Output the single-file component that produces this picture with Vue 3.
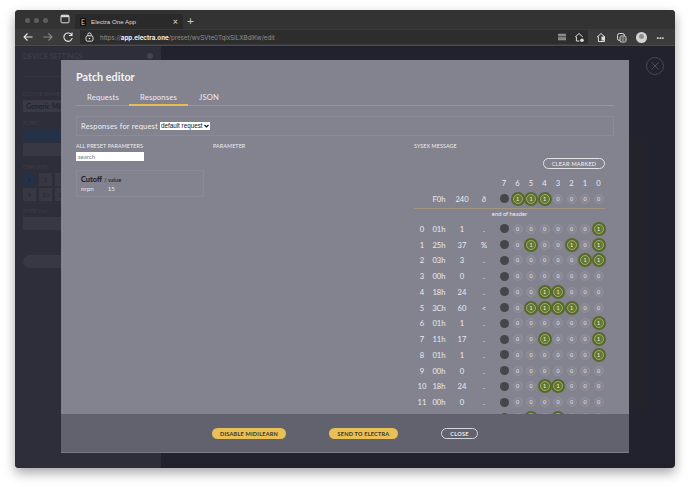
<template>
  <div class="page">
    <div class="window">
      <div class="titlebar">
        <div class="lights"><i></i><i></i><i></i></div>
        <svg class="tab-btn" width="10" height="10" viewBox="0 0 10 10"><rect x="1" y="1.2" width="8" height="7.6" rx="1" fill="none" stroke="#ddd" stroke-width="1"/><rect x="1" y="1.2" width="8" height="2" fill="#ddd"/></svg>
        <div class="tab">
          <span class="favicon">E</span>
          <span class="tab-title">Electra One App</span>
          <span class="tab-close">×</span>
        </div>
        <span class="new-tab">+</span>
      </div>
      <div class="toolbar">
        <svg class="nav" width="12" height="12" viewBox="0 0 12 12"><path d="M10.5 6H2M5.5 2.5 2 6l3.5 3.5" fill="none" stroke="#e6e6e6" stroke-width="1.1"/></svg>
        <svg class="nav fwd" width="12" height="12" viewBox="0 0 12 12"><path d="M1.5 6H10M6.5 2.5 10 6l-3.5 3.5" fill="none" stroke="#8a8a8a" stroke-width="1.1"/></svg>
        <svg class="nav reload" width="12" height="12" viewBox="0 0 12 12"><path d="M9.8 4.2A4.2 4.2 0 1 0 10.2 7M10 1.5v3H7" fill="none" stroke="#e6e6e6" stroke-width="1.1"/></svg>
        <div class="address">
          <svg width="9" height="10" viewBox="0 0 9 10"><rect x="1" y="3.8" width="7" height="5.4" rx="1.6" fill="none" stroke="#ddd" stroke-width="1"/><path d="M2.8 3.8V2.6a1.7 1.7 0 0 1 3.4 0v1.2" fill="none" stroke="#ddd" stroke-width="1"/><circle cx="4.5" cy="6.5" r=".8" fill="#ddd"/></svg>
          <span class="url">https://<b>app.electra.one</b>/preset/wvSVte0TqlxSILXBdlKw/edit</span>
          <svg class="addr-icon first" width="10" height="8" viewBox="0 0 10 8"><rect x="1" y=".7" width="8" height="6.6" fill="#8a8a8a"/><rect x="1" y="3.4" width="8" height=".8" fill="#2d2d2d"/></svg>
          <svg class="addr-icon" width="11" height="11" viewBox="0 0 11 11"><path d="M1.2 5 5 1.5 8.8 5M2.4 4.6V9h3" fill="none" stroke="#ddd" stroke-width="1"/><circle cx="8" cy="8.3" r="1.8" fill="#ddd"/></svg>
        </div>
        <svg class="tool one" width="11" height="11" viewBox="0 0 11 11"><path d="M1 5.2 5 1.5 9 5.2M2.4 4.4V9.5h6V4.4" fill="none" stroke="#ddd" stroke-width="1"/><rect x="5.5" y="4.5" width="3.5" height="4" fill="#ddd"/></svg>
        <svg class="tool" width="11" height="11" viewBox="0 0 11 11"><rect x="1.5" y="1.5" width="7" height="7" rx="2" fill="none" stroke="#ddd" stroke-width="1"/><rect x="4" y="4" width="6" height="6" rx="1.5" fill="#3b3b3b" stroke="#ddd" stroke-width="1"/><path d="M5.5 6h3M5.5 8h3" stroke="#ddd" stroke-width=".8"/></svg>
        <span class="avatar"><i></i></span>
        <span class="dots">···</span>
      </div>

      <div class="content">
        <aside class="sidebar">
          <div class="side-head"><span>DEVICE SETTINGS</span><i></i></div>
          <div class="side-label">DEVICE NAME</div>
          <div class="side-input">Generic MIDI</div>
          <div class="side-label port">PORT</div>
          <div class="side-block blue"></div>
          <div class="side-block"></div>
          <div class="side-label chan">CHANNEL</div>
          <div class="side-grid">
            <span class="active">1</span><span>2</span><span>3</span><span>4</span>
            <span>9</span><span>10</span><span>11</span><span>12</span>
          </div>
          <div class="side-label rate">RATE (ms)</div>
          <div class="side-block"></div>
          <div class="side-pill"></div>
        </aside>
        <main class="backdrop"><div class="back-panel"></div></main>

        <section class="modal">
          <div class="modal-body">
            <h1>Patch editor</h1>
            <nav class="tabs">
              <span v-for="t in tabs" :key="t" class="tab-link" :class="{ active: t === 'Responses' }">{{ t }}</span>
            </nav>
            <div class="request-bar">
              <span>Responses for request</span>
              <div class="select-wrap">
                <select><option>default request</option></select>
                <svg width="5" height="4" viewBox="0 0 5 4"><path d="M.5 1 2.5 3 4.5 1" fill="none" stroke="#111" stroke-width="1.2"/></svg>
              </div>
            </div>
            <div class="columns">
              <div class="col-params">
                <div class="col-label">ALL PRESET PARAMETERS</div>
                <input class="search" placeholder="search" />
                <div class="param-card">
                  <div class="param-name"><strong>Cutoff</strong><small>/ value</small></div>
                  <div class="param-meta"><span>nrpn</span><span>15</span></div>
                </div>
              </div>
              <div class="col-param">
                <div class="col-label">PARAMETER</div>
              </div>
              <div class="col-sysex">
                <div class="col-label">SYSEX MESSAGE</div>
                <div class="clear-row"><button class="clear">CLEAR MARKED</button></div>
                <div class="row heads">
                  <span></span><span></span><span></span><span></span>
                  <div class="bits"><span v-for="n in 8" :key="n">{{ 8 - n }}</span></div>
                </div>
                <div class="row">
                  <span></span><span>F0h</span><span>240</span><span>ð</span>
                  <div class="bits">
                    <i class="dot"></i>
                    <span v-for="(b, i) in bitsOf(240)" :key="i" class="bit" :class="{ on: b }">{{ b }}</span>
                  </div>
                </div>
                <div class="header-end">end of header</div>
                <div v-for="(r, idx) in rows" :key="idx" class="row">
                  <span>{{ idx }}</span><span>{{ r.hex }}</span><span>{{ r.val }}</span><span>{{ r.ch }}</span>
                  <div class="bits">
                    <i class="dot"></i>
                    <span v-for="(b, i) in bitsOf(r.val)" :key="i" class="bit" :class="{ on: b }">{{ b }}</span>
                  </div>
                </div>
                <!-- next row only peeks out above the footer -->
                <div class="row">
                  <span></span><span></span><span></span><span></span>
                  <div class="bits">
                    <i class="dot"></i>
                    <span v-for="(b, i) in bitsOf(40)" :key="i" class="bit" :class="{ on: b }"></span>
                  </div>
                </div>
              </div>
            </div>
          </div>
          <footer class="modal-foot">
            <button class="pill disable">DISABLE MIDILEARN</button>
            <button class="pill send">SEND TO ELECTRA</button>
            <button class="pill ghost">CLOSE</button>
          </footer>
        </section>
        <div class="x-btn">
          <svg width="10" height="10" viewBox="0 0 10 10"><path d="M1.5 1.5l7 7M8.5 1.5l-7 7" stroke="#4d4d5c" stroke-width="1"/></svg>
        </div>
      </div>
    </div>
  </div>
</template>

<script setup>
const tabs = ["Requests", "Responses", "JSON"];

const values = [1, 37, 3, 0, 24, 60, 1, 17, 1, 0, 24, 0];

const rows = values.map((val) => {
  const h = val.toString(16).toUpperCase().padStart(2, "0");
  const ch = val === 37 ? "%" : val === 60 ? "<" : ".";
  return { hex: h + "h", val, ch };
});

// bit 6 down to bit 0, bit 7 is the dark dot
const bitsOf = (val) => {
  const out = [];
  for (let i = 6; i >= 0; i--) out.push((val >> i) & 1);
  return out;
};
</script>

<style>
html,
body {
  margin: 0;
  background: #fff;
}
</style>

<style scoped>
.page {
  width: 690px;
  height: 487px;
  padding: 10px 15px 19px;
  box-sizing: border-box;
  overflow: hidden;
  font-family: Lato, "Open Sans", sans-serif;
}

.window {
  height: 458px;
  border-radius: 4px;
  overflow: hidden;
  display: flex;
  flex-direction: column;
  box-shadow: 0 5px 12px rgba(0, 0, 0, 0.35);
  background: #22222e;
}

.titlebar {
  height: 19px;
  background: #333;
  display: flex;
  align-items: flex-end;
  flex: none;
}

.lights {
  display: flex;
  gap: 4px;
  padding: 0 0 6px 10px;
}

.lights i {
  width: 5px;
  height: 5px;
  border-radius: 50%;
  background: #5e5e5e;
}

.tab-btn {
  margin: 0 0 5px 12px;
}

.tab {
  width: 108px;
  height: 15px;
  margin-left: 5px;
  background: #2a2a2a;
  border-radius: 3px 3px 0 0;
  display: flex;
  align-items: center;
  color: #ddd;
  font-size: 7.5px;
}

.favicon {
  width: 6px;
  height: 8px;
  margin: 0 5px 0 5px;
  background: #111;
  color: #ccc;
  font-size: 7px;
  line-height: 8px;
  text-align: center;
}

.tab-title {
  flex: 1;
  font-family: "Liberation Sans", sans-serif;
  font-size: 6.2px;
}

.tab-close {
  margin-right: 5px;
  font-size: 9px;
}

.new-tab {
  margin: 0 0 1px 4px;
  color: #ccc;
  font-size: 12px;
  line-height: 14px;
}

.toolbar {
  height: 17px;
  background: #3b3b3b;
  border-bottom: 1px solid #4a4a4a;
  box-sizing: border-box;
  display: flex;
  align-items: center;
  flex: none;
}

.nav {
  margin-left: 7px;
  flex: none;
}

.nav.fwd,
.nav.reload {
  margin-left: 8px;
}

.address {
  width: 508px;
  height: 14px;
  margin-left: 6px;
  padding-left: 5px;
  box-sizing: border-box;
  background: #2d2d2d;
  display: flex;
  align-items: center;
  flex: none;
}

.url {
  margin-left: 6px;
  flex: 1;
  color: #8f8f8f;
  font-family: Inter, sans-serif;
  font-size: 6.2px;
  white-space: nowrap;
}

.url b {
  color: #eee;
  font-weight: 700;
}

.addr-icon {
  margin-right: 3px;
  flex: none;
}

.addr-icon.first {
  margin-right: 7px;
}

.tool {
  margin-left: 9px;
  flex: none;
}

.tool.one {
  margin-left: 7.5px;
}

.avatar {
  width: 11px;
  height: 11px;
  margin-left: 9px;
  border-radius: 50%;
  background: #d4d4d4;
  overflow: hidden;
  display: flex;
  justify-content: center;
  flex: none;
}

.avatar i {
  width: 5px;
  height: 5px;
  margin-top: 2px;
  border-radius: 50%;
  background: #8f8f8f;
}

.dots {
  margin-left: 10px;
  color: #ddd;
  font-size: 9px;
  font-weight: 700;
}

.content {
  position: relative;
  flex: 1;
  display: flex;
  overflow: hidden;
}

.sidebar {
  width: 146px;
  flex: none;
  background: #2e2e3a;
  padding: 6px 8px 0 8px;
  box-sizing: border-box;
  color: #3c3c48;
  font-size: 6px;
}

.side-head {
  display: flex;
  justify-content: space-between;
  align-items: center;
  font-size: 7px;
  font-weight: 700;
  padding-bottom: 16px;
  border-bottom: 1px solid #34343f;
}

.side-head i {
  width: 6px;
  height: 6px;
  border-radius: 50%;
  background: #43434f;
}

.side-label {
  margin-top: 14px;
  margin-bottom: 3px;
  font-size: 5.5px;
}

.side-label.port,
.side-label.chan {
  margin-top: 8px;
}

.side-label.rate {
  margin-top: 7px;
}

.side-input {
  height: 12px;
  line-height: 12px;
  padding-left: 3px;
  background: #3a3a46;
  color: #22222c;
  font-size: 7px;
  font-weight: 700;
}

.side-block {
  height: 13px;
  margin-bottom: 1px;
  background: #383844;
}

.side-block.blue {
  background: #243247;
}

.side-grid {
  display: grid;
  grid-template-columns: repeat(4, 13px);
  gap: 2px 3px;
}

.side-grid span {
  height: 13px;
  line-height: 13px;
  text-align: center;
  background: #383844;
  color: #24242e;
}

.side-grid .active {
  background: #243247;
}

.side-pill {
  height: 13px;
  margin-top: 25px;
  border-radius: 7px;
  background: #383844;
}

.backdrop {
  flex: 1;
  position: relative;
}

.back-panel {
  margin: 91px 28px 0 0;
  height: 271px;
  background: #24232c;
}

/* dialog lies over the page */
.modal {
  position: absolute;
  left: 46px;
  top: 14px;
  width: 568px;
  height: 393px;
  background: #83828f;
  display: flex;
  flex-direction: column;
  overflow: hidden;
}

.modal-body {
  flex: 1;
  min-height: 0;
  overflow: hidden;
  padding: 9px 15px 0;
  color: #f0f0f2;
}

h1 {
  margin: 0;
  height: 15px;
  line-height: 15px;
  font-size: 10.8px;
  font-weight: 700;
  color: #f4f4f6;
}

.tabs {
  display: flex;
  margin-top: 6px;
  height: 15px;
  border-bottom: 1px solid #a09680;
}

.tab-link {
  padding: 0 11px;
  height: 15px;
  font-size: 7.7px;
  line-height: 15px;
  letter-spacing: 0.15px;
  color: #ecebef;
}

.tab-link.active {
  height: 14px;
  width: 37px;
  border-bottom: 2px solid #e6bd4e;
}

.tab-link:first-child {
  width: 31px;
}

.request-bar {
  margin-top: 10px;
  height: 20px;
  border: 1px solid #8b8a96;
  box-sizing: border-box;
  padding-left: 4px;
  display: flex;
  align-items: center;
  gap: 2px;
  font-size: 7.5px;
  letter-spacing: 0.2px;
}

.select-wrap {
  position: relative;
  width: 50px;
  height: 8px;
}

.select-wrap svg {
  position: absolute;
  right: 1px;
  top: 2px;
}

select {
  display: block;
  width: 50px;
  height: 8px;
  padding: 0 0 0 1px;
  border: 0;
  border-radius: 0;
  appearance: none;
  background: #fff;
  color: #111;
  font-family: "Liberation Sans", sans-serif;
  font-size: 6.3px;
  line-height: 8px;
}

.columns {
  display: grid;
  grid-template-columns: 137px 201px 191px;
  margin-top: 6px;
}

.col-label {
  height: 8px;
  line-height: 8px;
  font-size: 5.4px;
  letter-spacing: 0.1px;
  color: #eeeef0;
}

.search {
  display: block;
  width: 68px;
  height: 9px;
  margin-top: 2px;
  padding: 0 2px;
  box-sizing: border-box;
  border: 0;
  border-radius: 0;
  background: #fff;
  font-family: Lato, sans-serif;
  font-size: 6px;
}

.search::placeholder {
  color: #777;
}

.param-card {
  width: 128px;
  height: 27px;
  margin-top: 9px;
  padding: 4px;
  box-sizing: border-box;
  border: 1px solid #8b8a96;
  color: #17171d;
}

.param-name {
  display: flex;
  align-items: baseline;
  gap: 2px;
  height: 9px;
  line-height: 9px;
}

.param-name strong {
  font-size: 7.4px;
}

.param-name small {
  font-size: 5.8px;
}

.param-meta {
  display: flex;
  gap: 14px;
  height: 9px;
  line-height: 9px;
  color: #e9e9ec;
  font-size: 6.2px;
}

.clear-row {
  display: flex;
  justify-content: flex-end;
  height: 11px;
  margin-top: 8px;
}

.clear {
  width: 62px;
  height: 11px;
  padding: 0;
  border: 1px solid #e4e4e8;
  border-radius: 6px;
  background: transparent;
  color: #f0f0f2;
  font-family: Lato, sans-serif;
  font-size: 5.6px;
  letter-spacing: 0.2px;
}

.row {
  display: grid;
  grid-template-columns: 16px 18px 28px 16px 115px;
  height: 15.75px;
  align-items: center;
  font-size: 7.6px;
  text-align: center;
  color: #ecebef;
}

.row.heads {
  margin-top: 6px;
}

.bits {
  display: grid;
  grid-template-columns: repeat(8, 13.5px);
  padding-left: 5.25px;
  justify-items: center;
  align-items: center;
}

.dot {
  width: 9px;
  height: 9px;
  border-radius: 50%;
  background: #45454b;
}

.bit {
  width: 8px;
  height: 8px;
  line-height: 8px;
  border-radius: 50%;
  outline: 1px solid rgba(255, 255, 255, 0.1);
  background: rgba(255, 255, 255, 0.05);
  font-size: 5.4px;
  color: #e4e4e8;
}

.bit.on {
  outline: 1px solid rgba(215, 222, 180, 0.55);
  background: #667730;
  box-shadow: 0 0 0 3px #566928;
  color: #f1f3e0;
}

.header-end {
  height: 11px;
  margin: 1px 0 1.5px;
  border-top: 1px solid #a09680;
  line-height: 10px;
  text-align: center;
  font-size: 5.8px;
}

.modal-foot {
  height: 39px;
  flex: none;
  box-sizing: border-box;
  background: #62626e;
  border-bottom: 1px solid #7b7b87;
  display: flex;
  align-items: center;
  padding-left: 151px;
}

.pill {
  height: 11px;
  padding: 0;
  border: 0;
  border-radius: 6px;
  font-family: Lato, sans-serif;
  font-size: 5.6px;
  font-weight: 700;
  letter-spacing: 0.2px;
}

.disable {
  width: 74px;
  background: #e8c056;
  color: #3a3424;
}

.send {
  width: 69px;
  margin-left: 43px;
  background: #e8c056;
  color: #3a3424;
}

.ghost {
  width: 37px;
  margin-left: 43px;
  border: 1px solid #d6d6dc;
  background: transparent;
  color: #e8e8ec;
}

.x-btn {
  position: absolute;
  left: 631px;
  top: 11px;
  width: 18px;
  height: 18px;
  box-sizing: border-box;
  border: 1px solid #45455a;
  border-radius: 50%;
  display: flex;
  align-items: center;
  justify-content: center;
}
</style>
